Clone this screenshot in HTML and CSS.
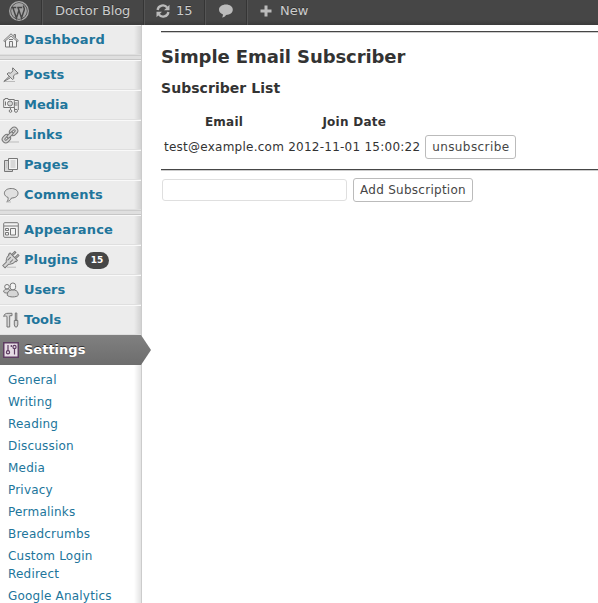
FILE: index.html
```html
<!DOCTYPE html>
<html lang="en">
<head>
<meta charset="utf-8">
<title>Simple Email Subscriber</title>
<link rel="stylesheet" href="styles.css">
</head>
<body>
<header class="bar">
  <div class="bar-item logo"><svg width="22" height="22" viewBox="0 0 22 22"><circle cx="11" cy="11" r="9.3" fill="none" stroke="#aaa" stroke-width="1.3"/><circle cx="11" cy="11" r="7.9" fill="#a5a5a5"/><path d="M3.500 7.500h4.800M9.200 7.500h5M4.800 7.500l3.600 10.500 2.800-8.200M10 7.500l3.500 10.500 2.700-8c.7-2.200-1.200-2.800-.6-4.500" fill="none" stroke="#464646" stroke-width="1.500"/></svg></div>
  <div class="bar-item site">Doctor Blog</div>
  <div class="bar-item updates"><svg width="16" height="14" viewBox="0 0 16 14"><g fill="none" stroke="#bbb" stroke-width="2.300"><path d="M2.600 6C3.200 1.200 9.500-.2 12.200 3.600"/><path d="M13.400 8C12.800 12.800 6.500 14.200 3.800 10.400"/></g><path d="M14.500.8v5.500H9zM1.500 13.200V7.700H7z" fill="#bbb"/></svg><span>15</span></div>
  <div class="bar-item talk"><svg width="16" height="14" viewBox="0 0 16 14"><path d="M8 .5c4 0 6.800 2.200 6.800 5.200S12 10.900 8 10.900c-.6 1.200-2.200 2.400-4 2.600.8-1 1-2 .8-3.300C2.500 9.300 1 7.700 1 5.700 1 2.700 4 .5 8 .5z" fill="#bbb"/></svg></div>
  <div class="bar-item new"><svg width="12" height="12" viewBox="0 0 12 12"><path d="M6 .5v11M.5 6h11" stroke="#bbb" stroke-width="3"/></svg><span>New</span></div>
</header>
<div class="page">
  <nav class="menu">
    <a class="top wide"><svg class="icon" viewBox="0 0 16 16"><path d="M2.500 8v7h11V8M12.500 6V2.500H11v2M6.500 15V9.500h3V15"/><path d="M.7 8.700 8 1.800l7.300 6.900-1 .8L8 3.900 1.700 9.500z"/><path d="M6 7.500h4"/></svg><span>Dashboard</span></a>
    <div class="sep"></div>
    <a class="top"><svg class="icon" viewBox="0 0 16 16"><path class="shade" d="M1 14.500h11"/><path class="metal" d="M9.800.8l5.400 5.400-1.200.8-1.200-.3-2.300 2.300.3 2.500-1.300 1L4 7l1.200-1.200 2.500.3L10 3.800 9.400 2zM6 9.500.8 14.500l6.500-3.700"/></svg><span>Posts</span></a>
    <a class="top"><svg class="icon" viewBox="0 0 16 16"><path d="M.7 2.500H2V1.500h3v1h6.300v8H.7z"/><circle class="metal" cx="7" cy="6.500" r="2.500"/><path d="M11.500 3.500h3.800V13M14.500 6h-3v2h3M7.500 14v-3.500h4V14"/><circle cx="7.500" cy="14" r="1.300"/><circle cx="13" cy="13.800" r="1.500"/><path d="M2.500 4.500v4"/></svg><span>Media</span></a>
    <a class="top"><svg class="icon links" viewBox="0 0 16 16"><path class="shade" d="M5 15h12"/><g transform="rotate(-45 8 8)"><rect class="metal" x="-1.500" y="4.500" width="8.800" height="7" rx="3.400"/><rect class="light" x="1" y="7" width="4" height="2" rx="1"/><rect class="metal" x="8.700" y="4.500" width="8.800" height="7" rx="3.400"/><rect class="light" x="11" y="7" width="4" height="2" rx="1"/><rect class="metal" x="4.300" y="6.600" width="7.400" height="2.800" rx="1.400"/></g></svg><span>Links</span></a>
    <a class="top wide"><svg class="icon" viewBox="0 0 16 16"><path class="metal" d="M5 3.500H1.500v11h8V13"/><path d="M5.500 1.500h9v11h-9z"/><path class="shade" d="M7.500 4h5M7.500 6h5M7.500 8h5M7.500 10h5M3 6h1M3 8h1M3 10h1"/></svg><span>Pages</span></a>
    <a class="top wide"><svg class="icon" viewBox="0 0 16 16"><path class="bubble" d="M8.200 1.500c4 0 6.800 2 6.800 4.800S12.500 11 8.500 11c-1 2-2.200 3.200-4.500 3.500 1-1.200 1.300-2.500 1.100-4C3 9.700 1.400 8.300 1.400 6.300c0-2.800 2.800-4.800 6.800-4.800z"/><path class="shade" d="M3 15h5"/></svg><span>Comments</span></a>
    <div class="sep"></div>
    <a class="top wide"><svg class="icon" viewBox="0 0 16 16"><rect x=".7" y=".7" width="14.600" height="14.600" rx="1"/><path d="M1 4h14M7.500 6.500h5v6.500h-5zM2.500 6.500h3v2h-3zM2.500 10.500h3V13h-3z"/></svg><span>Appearance</span></a>
    <a class="top"><svg class="icon links" viewBox="0 0 16 16"><path class="shade" d="M5 15.200h9"/><g transform="rotate(45 8 8)"><path class="metal" d="M5.300 3v-4.500h1.500V3M9.700 3v-4.500h1.500V3M3 3h10.500v2h-.7c.3 3-.8 5.500-2.800 7v5H6.800v-5C4.500 10.500 3.500 8 3.700 5H3z"/><path d="M6.500 5.500V10M9.800 5.500V10"/></g></svg><span>Plugins</span><b class="count">15</b></a>
    <a class="top"><svg class="icon" viewBox="0 0 16 16"><circle cx="4" cy="4.800" r="2.300"/><path class="metal" d="M2.800 7.200C1.200 7.700.7 8.800.7 10c.7 1.300 4.300 1.300 6 .4V7.800L5.300 7z"/><rect x="7.200" y="1" width="5.400" height="7" rx="2.600"/><path class="metal" d="M8.200 8c-2.500.6-4 2-4 5.200 1.600 2.300 9.500 2.300 11.100 0 0-3.200-1.300-4.600-3.700-5.200z"/></svg><span>Users</span></a>
    <a class="top"><svg class="icon" viewBox="0 0 16 16"><path class="metal" d="M.7 4.500C1.200 2.200 2.500 1.300 5 1.300h4v2.400H6.700V15H4V4.500C3 3.800 1.700 4 .7 4.500z"/><path class="metal" d="M12.300 1h1.500v7h-1.500zM11.300 8.500h3.500V13l-1 2h-1.500l-1-2z"/></svg><span>Tools</span></a>
    <a class="top current"><svg class="icon" viewBox="0 0 16 16"><rect class="panel" x=".75" y=".75" width="14.500" height="14.500"/><path class="knobs" d="M5 3v6M11.500 6v6.500M8.300 3v2"/><circle class="knobs" cx="5" cy="10.300" r="1.600"/><circle class="knobs" cx="11.500" cy="5" r="1.600"/></svg><span>Settings</span></a>
    <div class="sub">
      <a>General</a><a>Writing</a><a>Reading</a><a>Discussion</a><a>Media</a><a>Privacy</a><a>Permalinks</a><a>Breadcrumbs</a><a>Custom Login Redirect</a><a>Google Analytics</a>
    </div>
  </nav>
  <main class="content">
    <hr>
    <h2>Simple Email Subscriber</h2>
    <h3>Subscriber List</h3>
    <table>
      <tr><th>Email</th><th>Join Date</th><th></th></tr>
      <tr><td>test@example.com</td><td>2012-11-01 15:00:22</td><td class="act"><button class="unsub">unsubscribe</button></td></tr>
    </table>
    <hr>
    <div class="add"><input type="text"><button class="sub-btn">Add Subscription</button></div>
  </main>
</div>
</body>
</html>
```

FILE: styles.css
```css
* { box-sizing: border-box; }
body {
  margin: 0;
  height: 603px;
  overflow: hidden;
  background: #fff;
  color: #333;
  font: 12px/18px "DejaVu Sans", sans-serif;
}
.bar {
  display: flex;
  height: 25px;
  background: linear-gradient(#464646 80%, #3b3b3b);
  color: #ccc;
  font-size: 13px;
  line-height: 22px;
  text-shadow: 0 -1px 0 #333;
}
.bar-item {
  display: flex;
  border-right: 1px solid #353535;
  box-shadow: 1px 0 #555;
  white-space: nowrap;
}
.bar-item svg { flex: none; }
.logo { width: 42px; padding-left: 8px; }
.site { width: 102px; padding-left: 13px; letter-spacing: -.1px; }
.updates { width: 61px; padding: 0 0 0 11px; gap: 5px; }
.updates svg { margin-top: 4px; }
.talk { width: 42px; padding: 4px 0 0 13px; }
.new { padding-left: 13px; gap: 8px; border: 0; box-shadow: none; }
.new svg { margin-top: 5px; }
.page { display: flex; height: 578px; }
.menu {
  flex: none;
  width: 142px;
  border-right: 1px solid #ccc;
  background: linear-gradient(to left, rgba(0,0,0,.11), transparent 7px);
}
.top {
  display: flex;
  align-items: center;
  position: relative;
  height: 30px;
  padding: 0 0 1px 3px;
  border-top: 1px solid #f9f9f9;
  border-bottom: 1px solid #dfdfdf;
  background: linear-gradient(to left, rgba(0,0,0,.11), transparent 7px), #ececec;
  color: #21759b;
  font-size: 13px;
  font-weight: bold;
}
.wide { letter-spacing: .18px; }
.icon {
  flex: none;
  width: 16px;
  height: 16px;
  margin-right: 5px;
  fill: #f3f3f3;
  stroke: #777;
  stroke-width: 1;
}
.icon .shade { stroke: #bbb; }
.icon .bubble { fill: #e0e0e0; }
.icon .metal { fill: #d6d6d6; }
.icon .light { fill: #ececec; }
.links { margin: 0 6px 0 -1px; overflow: visible; }
.sep {
  height: 5px;
  border-top: 1px solid #ccc;
  border-bottom: 1px solid #c6c6c6;
  background: #dfdfdf;
}
.count {
  width: 24px;
  height: 17px;
  margin: 2px 0 0 7px;
  border-radius: 9px;
  background: #464646;
  color: #fff;
  font-size: 9px;
  line-height: 16px;
  text-align: center;
}
.current {
  border-color: #808080 transparent #6d6d6d;
  border-width: 1px 0;
  background: linear-gradient(#808080, #6d6d6d);
  background-origin: border-box;
  color: #fff;
  text-shadow: 0 -1px 0 #333;
}
.current::after {
  content: "";
  position: absolute;
  top: -1px;
  left: 141px;
  width: 10px;
  height: 30px;
  background: linear-gradient(#808080, #6d6d6d);
  clip-path: polygon(0 0, 100% 50%, 0 100%);
}
.icon .panel { fill: #e6dbe5; stroke: #5e3d62; stroke-width: 1.5; }
.icon .knobs { fill: none; stroke: #5e3d62; stroke-width: 1.2; }
.sub { padding: 4px 8px; color: #21759b; letter-spacing: .2px; }
.sub a { display: block; padding: 2px 0; }
.content { flex: 1; padding: 6px 0 0 19px; }
hr {
  height: 2px;
  margin: 0;
  border: 0;
  border-top: 1px solid #464646;
  background: #ccc;
}
h2 { margin: 11px 0 0; font-size: 18px; line-height: 26px; letter-spacing: -.09px; }
h3 { margin: 8px 0 0; font-size: 14px; line-height: 20px; letter-spacing: .05px; }
table { margin: 12px 0 7px; border-spacing: 2px; border-collapse: separate; }
th, td { padding: 1px; white-space: nowrap; line-height: 18px; letter-spacing: .25px; }
.act { padding: 1px 1px 1px 2px; }
button {
  display: block;
  height: 24px;
  padding: 0 0 1px;
  border: 1px solid #bbb;
  border-radius: 3px;
  background: #fff;
  color: #464646;
  font: 12px/18px "DejaVu Sans", sans-serif;
  letter-spacing: .27px;
  white-space: nowrap;
}
.unsub { width: 91px; letter-spacing: .42px; }
.sub-btn { width: 120px; }
.add { display: flex; gap: 6px; align-items: center; margin: 7px 0 0 1px; }
input {
  width: 185px;
  height: 22px;
  padding: 2px;
  border: 1px solid #dfdfdf;
  border-radius: 3px;
  background: #fff;
}
```
